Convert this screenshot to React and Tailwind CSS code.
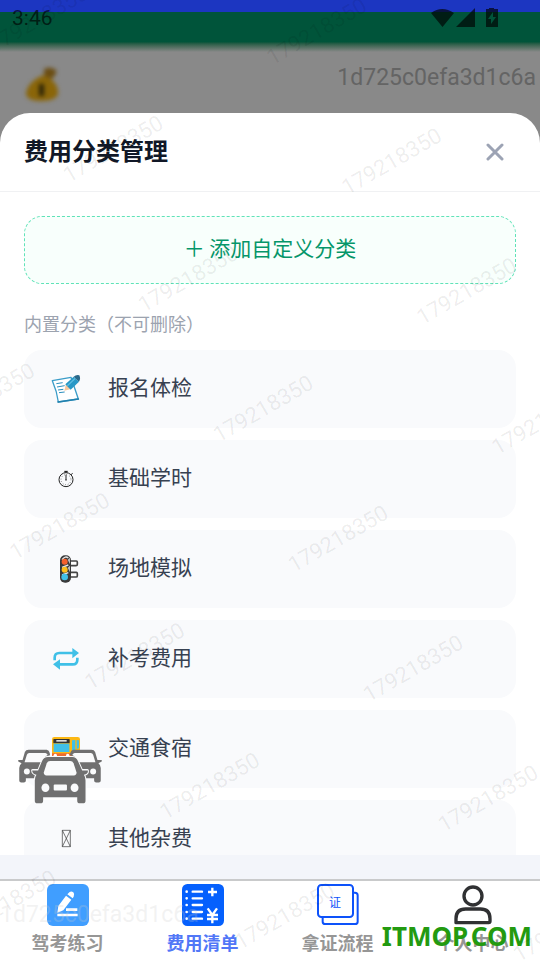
import { useState } from "react";

/* ── ICONS ───────────────────────────────────────────────────────────── */
const NoteIcon = () => (
  <svg viewBox="150 69 96 96" className="size-8" aria-hidden="true">
    <path d="M157 92 L213 82 L235 147 L175 156 Q171 124 157 92Z" fill="#fff" stroke="#3a9cc8" strokeWidth="4" strokeLinejoin="round" />
    <path d="M174 156 L235 147" stroke="#2180ad" strokeWidth="5" strokeLinecap="round" />
    <path d="M169 101 L188 98 M171 111 L194 107 M174 120 L190 118 M177 128 L194 126" stroke="#2b8fbe" strokeWidth="3" />
    <path d="M193 122 L198 102 L213 117Z" fill="#f7c79c" />
    <path d="M196 103 L221 80 L237 95 L212 119Z" fill="#2797c6" />
    <path d="M202 107 L226 85" stroke="#5bbce0" strokeWidth="4" />
    <path d="M221 80 Q229 73 238 76 Q243 86 237 95Z" fill="#29688a" />
  </svg>
);

const StopwatchIcon = () => (
  <svg viewBox="150 339 96 96" className="size-8" fill="none" stroke="#222" aria-hidden="true">
    <circle cx="198" cy="389" r="21" strokeWidth="3" />
    <circle cx="198" cy="389" r="15" strokeWidth="3" strokeDasharray="1.5 6.35" />
    <path d="M198 374 V390" strokeWidth="3" />
    <path d="M193 365 H203" strokeWidth="5" />
    <path d="M213 374 L218 370" strokeWidth="3" />
    <circle cx="198" cy="390" r="2" fill="#222" stroke="none" />
  </svg>
);

const LightIcon = () => (
  <svg viewBox="150 609 96 96" className="size-8" aria-hidden="true">
    <path d="M208 633 H229 Q232 633 232 637 V643 Q232 647 228 647 H208 M208 667 H229 Q232 667 232 671 V677 Q232 681 228 681 H208" fill="#fff" stroke="#444" strokeWidth="5" />
    <rect x="180" y="616" width="33" height="82" rx="15" fill="#3a3a3a" />
    <path d="M186 629 Q196 616 205 624 M186 652 L205 645 M186 675 L205 668" stroke="#e6e6e6" strokeWidth="4" fill="none" />
    <circle cx="194" cy="635" r="9" fill="#f4602c" />
    <circle cx="194" cy="659" r="9" fill="#fdbf1b" />
    <circle cx="194" cy="681" r="10" fill="#40c0e7" />
    <path d="M203 629 L210 623 V643Z M203 653 L210 647 V667Z" fill="#bbb" />
  </svg>
);

const RepeatIcon = () => (
  <svg viewBox="150 99 96 96" className="size-8" aria-hidden="true">
    <path d="M164 151 V143 Q164 129 178 129 H220 M232 143 V149 Q232 163 218 163 H176" fill="none" stroke="#40c0e7" strokeWidth="8" />
    <path d="M217 114 L237 129 L217 145Z M180 148 L159 163 L180 179Z" fill="#40c0e7" />
  </svg>
);

const BusIcon = () => (
  <svg viewBox="150 369 96 96" className="size-8" aria-hidden="true">
    <rect x="156" y="381" width="84" height="62" rx="7" fill="#fcb814" />
    <path d="M156 430 H211 L240 422 V436 L232 443 H156Z" fill="#ed6c30" />
    <rect x="160" y="387" width="49" height="13" rx="2" fill="#333" />
    <rect x="169" y="390" width="31" height="5" fill="#ddd" />
    <rect x="161" y="401" width="47" height="25" fill="#40c0e7" />
    <path d="M216 391 L226 390 V421 L216 424Z M230 390 L237 391 V414 L230 418Z" fill="#40c0e7" />
    <circle cx="166" cy="436" r="5" fill="#fff" />
    <circle cx="203" cy="436" r="5" fill="#fff" />
    <circle cx="233" cy="435" r="7" fill="#444" />
  </svg>
);

const MissingIcon = () => (
  <svg viewBox="150 639 96 96" className="size-8" fill="none" stroke="#333" strokeWidth="2" aria-hidden="true">
    <path d="M187 661 H211 V710 H187Z L211 710 M211 661 L187 710" />
  </svg>
);

const CarsIcon = () => (
  <svg viewBox="54 418 252 166" className="h-[55px] w-[84px]" aria-hidden="true">
    <g id="side-car">
      <path d="M54 451 H67 L74 427 Q77 420 85 420 H140 Q147 421 149 430 L150 437 Q128 442 123 458 L116 478 H96 L95 490 L104 495 V506 H77 V513 Q77 519 71 519 H63 Q57 519 57 513 V475 Q58 466 64 461 L54 456Z" fill="#707070" />
      <path d="M73 458 L80 435 Q82 430 87 430 H136 Q141 431 143 436 Q132 440 126 458Z" fill="#fafbfc" />
      <circle cx="80" cy="486" r="9" fill="#fafbfc" />
    </g>
    <use href="#side-car" transform="translate(360 0) scale(-1 1)" />
    <path d="M96 483 H114 L126 454 Q131 442 144 442 H217 Q229 442 234 454 L247 483 H264 Q266 493 252 496 Q257 503 257 512 V574 Q257 582 249 582 H240 Q232 582 232 574 V564 H129 V574 Q129 582 121 582 H112 Q104 582 104 574 V512 Q104 503 109 496 Q96 493 96 483Z" fill="#707070" stroke="#fafbfc" strokeWidth="6" paintOrder="stroke" />
    <path d="M131 489 L140 461 Q143 454 150 454 H211 Q218 454 221 461 L230 489 Q230 497 222 498 H139 Q131 497 131 489Z" fill="#fafbfc" />
    <ellipse cx="136" cy="535" rx="12" ry="13" fill="#fafbfc" />
    <ellipse cx="224" cy="535" rx="12" ry="13" fill="#fafbfc" />
    <rect x="161" y="525" width="40" height="18" rx="3" fill="#fafbfc" />
  </svg>
);

const MoneyBag = () => (
  <svg viewBox="0 0 36 40" className="h-10 w-9 blur-[2px]" aria-hidden="true">
    <path d="M20 5 Q26 2 32 6 Q33 11 27 15 L20 13Z" fill="#6b4d12" />
    <path d="M17 12 Q20 10 27 15 Q35 22 34 30 Q32 37 18 37 Q2 37 2 29 Q4 18 17 12Z" fill="#8a6508" />
    <path d="M15 20 H20 V32 H15Z" fill="#2c2408" />
  </svg>
);

const PracticeIcon = () => (
  <svg viewBox="0 0 126 126" className="size-[42px]" aria-hidden="true">
    <rect width="126" height="126" rx="18" fill="#409eff" />
    <path d="M34 66 L57 35 L73 47 L49 79 L31 86Z M61 31 L68 24 Q73 20 79 25 Q84 31 80 38 L77 43Z" fill="#fff" />
    <path d="M57 77 H91 M31 93 H92" stroke="#fff" strokeWidth="8" />
  </svg>
);

const BillIcon = () => (
  <svg viewBox="0 0 126 126" className="size-[42px]" stroke="#fff" fill="none" aria-hidden="true">
    <rect width="126" height="126" rx="16" fill="#0560fd" stroke="none" />
    <path d="M14 23 V23 M14 43 V43 M14 63 V63 M14 84 V84 M14 104 V104" strokeWidth="8" strokeLinecap="round" />
    <path d="M32 23 H60 M32 43 H60 M32 63 H60 M32 84 H60 M32 104 H60" strokeWidth="7" strokeLinecap="round" />
    <path d="M78 24 H105 M91 11 V37" strokeWidth="7" />
    <path d="M77 73 L91 93 L105 73 M91 92 V118 M75 93 H108 M75 105 H108" strokeWidth="7" />
  </svg>
);

const LicenceIcon = () => (
  <span className="relative flex size-[42px] items-start">
    <svg viewBox="0 0 126 126" className="absolute inset-0 size-[42px]" fill="none" stroke="#0d52fa" strokeWidth="6" aria-hidden="true">
      <path d="M108 26 H114 Q122 26 122 34 V113 Q122 120 114 120 H25 Q17 120 17 113 V100" />
      <rect x="3" y="3" width="105" height="96" rx="10" fill="#fff" />
    </svg>
    <span className="relative w-[37px] text-center text-xs leading-9 font-normal text-[#0d52fa]">证</span>
  </span>
);

const PersonIcon = () => (
  <svg viewBox="0 0 126 126" className="size-[42px]" fill="none" stroke="#303133" strokeWidth="10" aria-hidden="true">
    <circle cx="63" cy="36" r="27" />
    <path d="M12 116 V104 Q12 75 41 75 H85 Q114 75 114 104 V112 Q114 116 110 116Z" strokeLinejoin="round" />
  </svg>
);

/* ── DATA ────────────────────────────────────────────────────────────── */
const CATEGORIES = [
  { name: "报名体检", Icon: NoteIcon },
  { name: "基础学时", Icon: StopwatchIcon },
  { name: "场地模拟", Icon: LightIcon },
  { name: "补考费用", Icon: RepeatIcon },
  { name: "交通食宿", Icon: BusIcon },
  { name: "其他杂费", Icon: MissingIcon },
];

const TABS = [
  { name: "驾考练习", Icon: PracticeIcon },
  { name: "费用清单", Icon: BillIcon },
  { name: "拿证流程", Icon: LicenceIcon },
  { name: "个人中心", Icon: PersonIcon },
];

/* ── STATUS BAR + DIMMED PAGE HEADER ─────────────────────────────────── */
function TopArea() {
  return (
    <header className="shrink-0 font-[Roboto]">
      <div className="relative">
        <div className="h-3 bg-[#1c36c1]" />
        <div className="h-10 bg-linear-to-b from-[#00543a] from-75% to-[#898989]" />
        <div className="absolute inset-x-0 top-0 flex h-9 items-center justify-between pr-[42px] pl-3 text-black/65">
          <span className="text-[21px] leading-9">3:46</span>
          <svg viewBox="0 0 67 20" className="h-5 w-[67px]" fill="currentColor" aria-hidden="true">
            <path d="M0 5 Q11 -3 23 5 L11.500 19Z M44 0 V19 H25Z" />
            <path fillRule="evenodd" d="M55 1 H58 V-1 H63 V1 H67 V19 H55Z M62 4 L57 11 H60 V16 L65 9 H62Z" />
          </svg>
        </div>
      </div>
      <div className="flex h-[61px] items-start justify-between pr-1 pl-6">
        <div className="pt-3"><MoneyBag /></div>
        <span className="pt-2 text-[23px] leading-9 text-[#646464]">1d725c0efa3d1c6a</span>
      </div>
    </header>
  );
}

/* ── CATEGORY SHEET ──────────────────────────────────────────────────── */
function CategorySheet() {
  return (
    <section className="flex min-h-0 flex-1 flex-col overflow-hidden rounded-t-[30px] bg-white">
      <div className="flex h-[79px] shrink-0 items-center justify-between border-b border-[#f0f1f3] pr-9 pl-6">
        <h1 className="pb-1 text-2xl font-bold text-[#111827]">费用分类管理</h1>
        <button aria-label="关闭">
          <svg viewBox="0 0 18 18" className="size-[18px]" stroke="#9ca3b4" strokeWidth="3" strokeLinecap="round" aria-hidden="true">
            <path d="M2 2 L16 16 M16 2 L2 16" />
          </svg>
        </button>
      </div>
      <div className="min-h-0 flex-1 overflow-hidden px-6 pt-6">
        <button className="h-[68px] w-full rounded-[18px] border border-dashed border-[#5fe3b8] bg-[#f8fffc] pb-1 text-[21px] text-[#059669]">
          ＋ 添加自定义分类
        </button>
        <h2 className="mt-6 mb-3 text-lg leading-[30px] text-[#9ca3af]">内置分类（不可删除）</h2>
        <ul className="space-y-3">
          {CATEGORIES.map(({ name, Icon }) => (
            <li key={name} className="flex h-[78px] items-center gap-[26px] rounded-[18px] bg-[#f9fafc] px-[26px]">
              <Icon />
              <span className="pb-1 text-[21px] text-[#374151]">{name}</span>
            </li>
          ))}
        </ul>
      </div>
    </section>
  );
}

/* ── BOTTOM TABS ─────────────────────────────────────────────────────── */
function TabBar() {
  const [active, setActive] = useState("费用清单");
  return (
    <nav className="relative grid h-[81px] shrink-0 grid-cols-4 border-t-2 border-[#c9cacb] bg-white">
      {TABS.map(({ name, Icon }) => (
        <a key={name} href="#" onClick={() => setActive(name)}
          className={`flex flex-col items-center gap-1 pt-[3px] text-lg leading-6 font-bold ${active === name ? "text-[#5277f7]" : "text-[#969696]"}`}>
          <Icon />
          <span>{name}</span>
        </a>
      ))}
      <span className="pointer-events-none absolute top-[18px] left-0 font-[Roboto] text-[23px] leading-8 text-[#cccccc]/25">1d725c0efa3d1c6a</span>
      <span className="pointer-events-none absolute right-2 bottom-1.5 font-['Noto_Sans'] text-[26px] leading-9 font-bold text-[#239a10]">ITMOP.COM</span>
    </nav>
  );
}

/* ── WATERMARK ───────────────────────────────────────────────────────── */
function Watermark() {
  return (
    <div className="pointer-events-none absolute inset-0 overflow-hidden" aria-hidden="true">
      <div className="absolute top-0 left-0 grid origin-top-left auto-rows-[150px] grid-cols-[repeat(5,235px)] place-items-center font-[Roboto] text-[22px] text-black/8 [transform:rotate(-30deg)_translate(-564px,-40px)]">
        {Array.from({ length: 40 }, (_, i) => <span key={i}>179218350</span>)}
      </div>
    </div>
  );
}

export default function App() {
  return (
    <div className="relative flex h-screen flex-col overflow-hidden bg-[#898989] font-['Noto_Sans_CJK_SC',sans-serif]">
      <TopArea />
      <CategorySheet />
      <div className="h-6 shrink-0 bg-[#f3f5fa]" />
      <TabBar />
      <button className="absolute bottom-[156px] left-[18px]" aria-label="学车">
        <CarsIcon />
      </button>
      <Watermark />
    </div>
  );
}
